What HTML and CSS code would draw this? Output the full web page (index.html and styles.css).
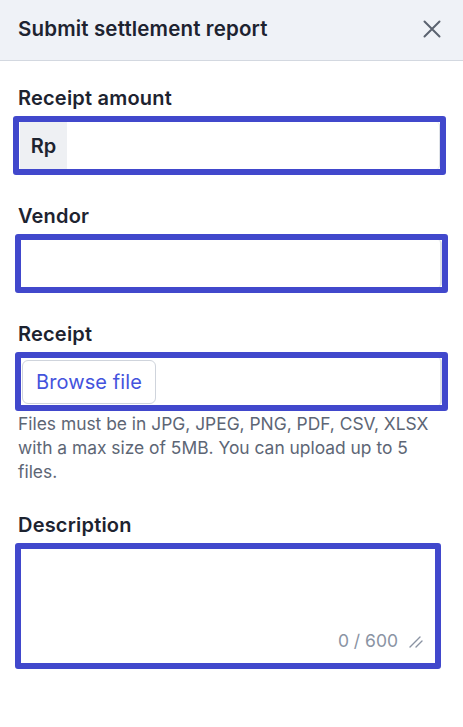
FILE: index.html
```html
<!DOCTYPE html>
<html lang="en">
  <head>
    <meta charset="UTF-8" />
    <meta name="viewport" content="width=device-width, initial-scale=1.0" />
    <title>Submit settlement report</title>
    <link rel="stylesheet" href="styles.css">
  </head>
  <body>
    <div class="header">
      <h2 class="title">Submit settlement report</h2>
      <span class="close">
        <svg width="18" height="18" viewBox="0 0 18 18">
          <path d="M1.5 1.5 L16.5 16.5 M16.5 1.5 L1.5 16.5" stroke="#5b6370" stroke-width="2" stroke-linecap="round" fill="none" />
        </svg>
      </span>
    </div>

    <form class="form">
      <div class="group">
        <label class="label">Receipt amount</label>
        <div class="field field-amount">
          <div class="inner">
            <span class="addon">Rp</span>
            <input type="text" class="input" />
          </div>
        </div>
      </div>

      <div class="group">
        <label class="label">Vendor</label>
        <div class="field field-vendor">
          <div class="inner">
            <input type="text" class="input" />
          </div>
        </div>
      </div>

      <div class="group">
        <label class="label">Receipt</label>
        <div class="field field-receipt">
          <div class="inner">
            <button type="button" class="browse">Browse file</button>
          </div>
        </div>
        <p class="help">Files must be in JPG, JPEG, PNG, PDF, CSV, XLSX with a max size of 5MB. You can upload up to 5 files.</p>
      </div>

      <div class="group group-desc">
        <label class="label">Description</label>
        <div class="field field-desc">
          <div class="textarea">
            <span class="counter">0 / 600</span>
            <svg class="grip" width="14" height="12" viewBox="0 0 14 12">
              <path d="M1 11 L11 1 M7 11 L13 5" stroke="#8a93a3" stroke-width="1.4" stroke-linecap="round" fill="none" />
            </svg>
          </div>
        </div>
      </div>
    </form>
  </body>
</html>
```

FILE: styles.css
```css
body {
  margin: 0;
  background-color: #ffffff;
  font-family: Inter, "Noto Sans", sans-serif;
  color: #1d2330;
}

.header {
  display: flex;
  align-items: center;
  justify-content: space-between;
  height: 60px;
  padding: 0 22px 0 18px;
  background-color: #eff2f7;
  border-bottom: 1px solid #d3d8e0;
}

.title {
  margin: -3px 0 0 0;
  font-size: 20.5px;
  font-weight: 600;
  letter-spacing: 0.15px;
}

.close {
  display: flex;
  width: 18px;
  height: 18px;
  margin-top: -2px;
}

.form {
  padding: 24px 0 0 0;
}

.group {
  margin-bottom: 28px;
}

.label {
  display: block;
  margin: 0 0 5px 18px;
  font-size: 20px;
  line-height: 26px;
  font-weight: 600;
  letter-spacing: 0.2px;
}

.field {
  border: 6px solid #4148cc;
  border-radius: 3px;
  background-color: #ffffff;
}

.field-amount {
  margin: 0 17px 0 13px;
}

.field-vendor,
.field-receipt {
  margin: 0 15px 0 15px;
}

.field-desc {
  margin: 0 22px 0 15px;
}

.inner {
  display: flex;
  align-items: center;
  height: 47px;
  border-right: 2px solid #dfe3e8;
  border-radius: 0 4px 4px 0;
}

.field-amount .inner {
  border-right-width: 1px;
}

.addon {
  display: flex;
  align-items: center;
  justify-content: center;
  width: 47px;
  height: 47px;
  margin-left: 1px;
  background-color: #eef0f3;
  font-size: 20px;
  font-weight: 600;
}

.input {
  flex: 1;
  height: 100%;
  border: none;
  outline: none;
  background: transparent;
  font-family: inherit;
  font-size: 18px;
}

.browse {
  height: 44px;
  margin-left: 1px;
  padding: 0 13px;
  border: 1px solid #cfd4dc;
  border-radius: 6px;
  background-color: #ffffff;
  color: #4453dd;
  font-family: inherit;
  font-size: 20px;
  letter-spacing: 0.1px;
}

.help {
  margin: 1px 18px 0 18px;
  font-size: 17.4px;
  line-height: 24px;
  color: #5d6675;
}

.group-desc .label {
  margin-top: 7px;
}

.textarea {
  display: flex;
  align-items: flex-end;
  justify-content: flex-end;
  height: 102px;
  padding: 0 12px 12px 0;
}

.counter {
  font-size: 17.5px;
  line-height: 20px;
  color: #8a93a3;
  margin-right: 11px;
}

.grip {
  margin-bottom: 3px;
}
```
